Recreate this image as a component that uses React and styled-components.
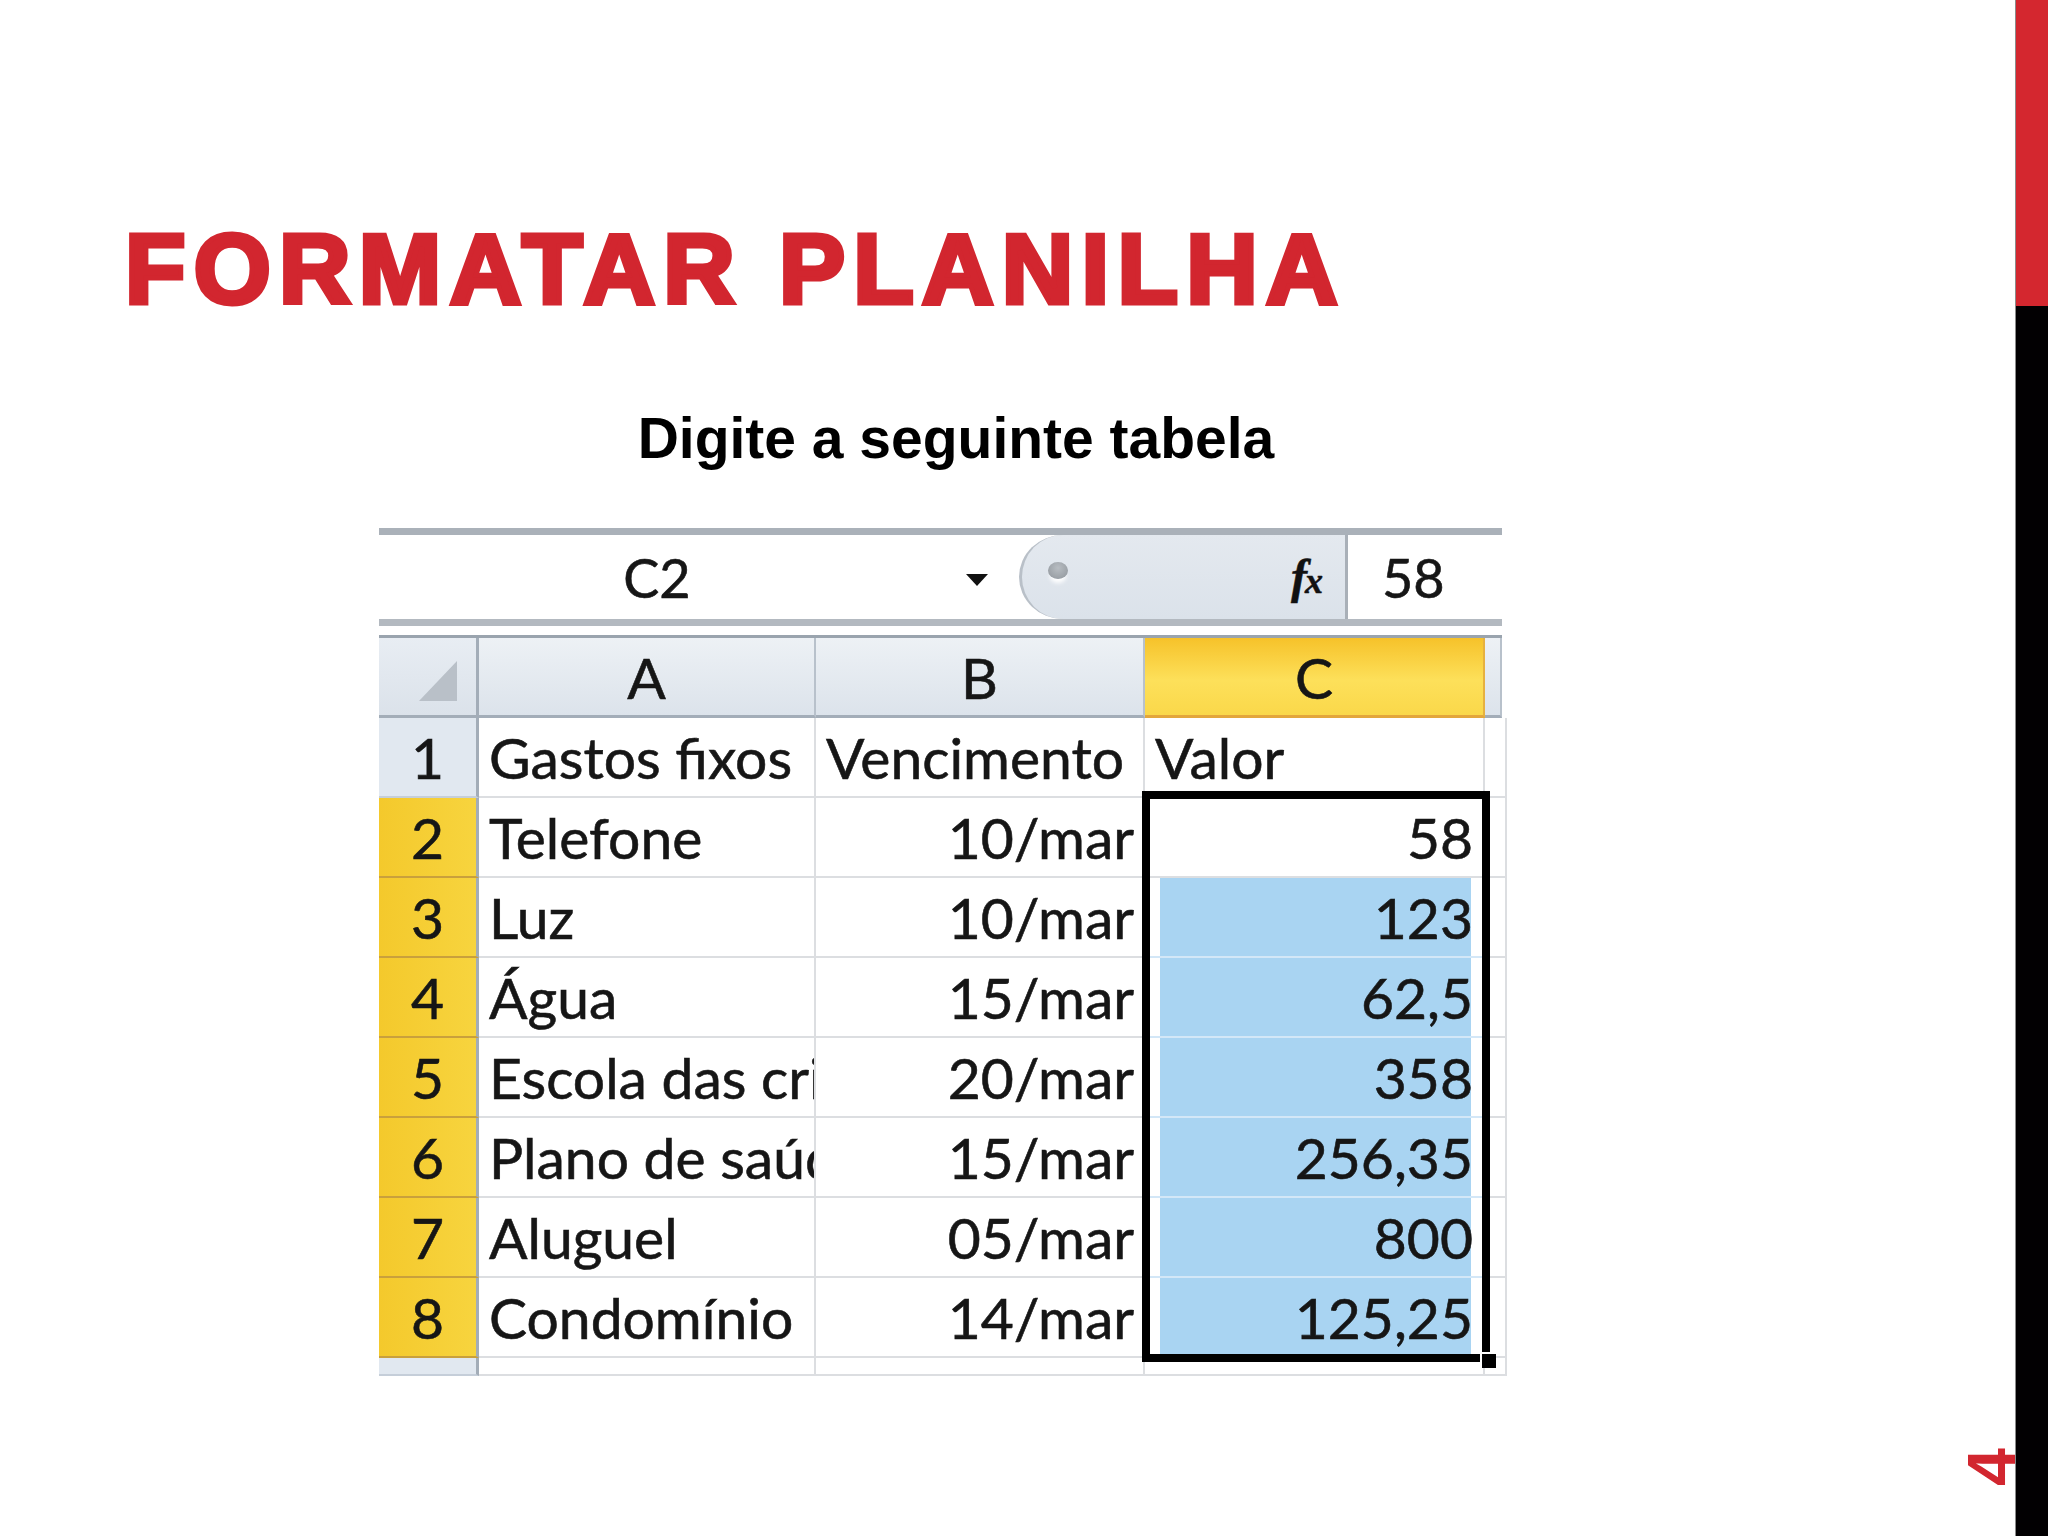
import styled, { createGlobalStyle } from "styled-components"
import { Fragment } from "react"

const Global = createGlobalStyle`
    html, body {
        margin: 0;
        padding: 0;
        background: #ffffff;
    }
    body {
        width: 2048px;
        height: 1536px;
        overflow: hidden;
        font-family: "Liberation Sans", Arial, sans-serif;
    }
`

const Slide = styled.div`
    position: relative;
    width: 2048px;
    height: 1536px;
    display: flex;
    background: #ffffff;
`

const Content = styled.div`
    flex: 1;
    display: flex;
    flex-direction: column;
    padding: 219px 0 0 125px;
`

const Title = styled.h1`
    margin: 0;
    font-family: "Liberation Sans", Arial, sans-serif;
    font-weight: 700;
    font-size: 99px;
    line-height: 1;
    letter-spacing: 8.3px;
    color: #d2262f;
    -webkit-text-stroke: 5px #d2262f;
`

const Subtitle = styled.h2`
    margin: 92px 0 0 0;
    width: 1662px;
    text-align: center;
    font-family: "Liberation Sans", Arial, sans-serif;
    font-weight: 700;
    font-size: 57px;
    line-height: 1;
    color: #000000;
`

const Sheet = styled.div`
    margin: 61px 0 0 254px;
    width: 1123px;
    display: flex;
    flex-direction: column;
    font-family: Lato, "Noto Sans", sans-serif;
    color: #161616;
    -webkit-text-stroke: 0.6px #161616;
`

const FormulaBar = styled.div`
    display: flex;
    height: 84px;
    border-top: 7px solid #aab1b9;
    border-bottom: 7px solid #b3b9c0;
    background: #ffffff;
`

const NameText = styled.div`
    width: 556px;
    display: flex;
    align-items: center;
    justify-content: center;
    font-size: 54px;
`

const ArrowBox = styled.div`
    width: 84px;
    display: flex;
    align-items: center;
    justify-content: center;
    padding-top: 6px;
`

const FnArea = styled.div`
    width: 326px;
    box-sizing: border-box;
    display: flex;
    align-items: center;
    justify-content: space-between;
    padding: 0 22px 0 26px;
    background: linear-gradient(#e4e9ef, #dbe2ea);
    border-left: 3px solid #b9c0c8;
    border-radius: 44px 0 0 44px / 42px 0 0 42px;
`

const Grip = styled.div`
    width: 20px;
    height: 17px;
    margin-top: -14px;
    border-radius: 50%;
    background: radial-gradient(circle at 50% 35%, #b8bdc2, #8f959b);
    box-shadow: 0 6px 4px -2px #ffffff;
`

const Fx = styled.div`
    font-family: "Liberation Serif", "Times New Roman", serif;
    font-style: italic;
    font-weight: 700;
    font-size: 48px;
    line-height: 1;
    color: #111;
    -webkit-text-stroke: 0.5px #111;

    span {
        font-size: 36px;
        margin-left: -2px;
    }
`

const Divider = styled.div`
    width: 3px;
    background: #a9b0b8;
`

const ValueText = styled.div`
    flex: 1;
    display: flex;
    align-items: center;
    padding-left: 34px;
    font-size: 54px;
`

const Gap = styled.div`
    height: 9px;
    background: #ffffff;
`

const Grid = styled.div`
    display: grid;
    grid-template-columns: 100px 337px 329px 340px 17px;
    grid-template-rows: repeat(9, 80px) 18px;
    border-top: 3px solid #9aa4ae;
    font-size: 57px;
`

const Corner = styled.div`
    box-sizing: border-box;
    display: flex;
    align-items: flex-end;
    justify-content: flex-end;
    padding: 0 19px 14px 0;
    background: linear-gradient(#e8edf3, #dbe2ea);
    border-right: 3px solid #a3adb8;
    border-bottom: 3px solid #a3adb8;
`

const ColHead = styled.div`
    box-sizing: border-box;
    display: flex;
    align-items: center;
    justify-content: center;
    background: ${(p) => p.$active
        ? "linear-gradient(#f6c22a, #fde05a 55%, #fad84a)"
        : "linear-gradient(#edf1f5, #dce3eb)"};
    border-right: 2px solid ${(p) => p.$active ? "#e6b13f" : "#b8c1cb"};
    border-bottom: 3px solid ${(p) => p.$active ? "#e3a63b" : "#a3adb8"};
`

const RowHead = styled.div`
    box-sizing: border-box;
    display: flex;
    align-items: center;
    justify-content: center;
    background: ${(p) => p.$active ? "linear-gradient(90deg, #f4c92c, #f7d43e)" : "#e1e8f0"};
    border-right: 3px solid #a3adb8;
    border-bottom: 2px solid ${(p) => p.$active ? "#c9a03c" : "#c5ced9"};
`

const Cell = styled.div`
    box-sizing: border-box;
    line-height: 78px;
    padding: 0 ${(p) => p.$align === "right" ? "9px" : "10px"};
    text-align: ${(p) => p.$align || "left"};
    white-space: nowrap;
    overflow: hidden;
    background: #ffffff;
    border-right: 2px solid #dcdee1;
    border-bottom: 2px solid #dcdee1;
`

const Selection = styled.div`
    grid-column: 4;
    grid-row: 3 / 10;
    position: relative;
    display: flex;
    flex-direction: column;

    &::after {
        content: "";
        position: absolute;
        top: -7px;
        right: -5px;
        bottom: -4px;
        left: -3px;
        border: 8px solid #000000;
        pointer-events: none;
    }
`

const ValueCell = styled(Cell)`
    height: 80px;
    padding-right: 10px;
    background: ${(p) => p.$fill ? "#a9d4f2" : "#ffffff"};
    box-shadow: ${(p) => p.$fill ? "inset 15px 0 0 #ffffff, inset -12px 0 0 #ffffff" : "none"};
    border-bottom: 2px solid ${(p) => p.$fill ? "#d3e7f7" : "#dcdee1"};
`

const FillHandle = styled.div`
    position: absolute;
    right: -11px;
    bottom: -10px;
    z-index: 2;
    width: 14px;
    height: 14px;
    background: #000000;
    border-left: 2px solid #ffffff;
    border-top: 2px solid #ffffff;
`

const SideBar = styled.div`
    width: 32px;
    display: flex;
    flex-direction: column;
    border-left: 1px solid #8b8b8b;
`

const RedBlock = styled.div`
    height: 306px;
    background: #d4272f;
`

const BlackBlock = styled.div`
    flex: 1;
    background: #020002;
`

const PageNumber = styled.div`
    position: absolute;
    left: 1972px;
    top: 1433px;
    width: 38px;
    height: 68px;
    font-family: "Liberation Sans", Arial, sans-serif;
    font-weight: 700;
    font-size: 68px;
    line-height: 1;
    color: #d2262f;
    transform: rotate(-90deg);
`

const rows = [
    ["Telefone", "10/mar", "58"],
    ["Luz", "10/mar", "123"],
    ["Água", "15/mar", "62,5"],
    ["Escola das crianças", "20/mar", "358"],
    ["Plano de saúde", "15/mar", "256,35"],
    ["Aluguel", "05/mar", "800"],
    ["Condomínio", "14/mar", "125,25"],
]

const App = () => {
    return (
        <Slide>
            <Global />
            <Content>
                <Title>FORMATAR PLANILHA</Title>
                <Subtitle>Digite a seguinte tabela</Subtitle>
                <Sheet>
                    <FormulaBar>
                        <NameText>C2</NameText>
                        <ArrowBox>
                            <svg width="24" height="14" viewBox="0 0 24 14">
                                <path d="M1 1 L23 1 L12 13 Z" fill="#111" />
                            </svg>
                        </ArrowBox>
                        <FnArea>
                            <Grip />
                            <Fx>f<span>x</span></Fx>
                        </FnArea>
                        <Divider />
                        <ValueText>58</ValueText>
                    </FormulaBar>
                    <Gap />
                    <Grid>
                        <Corner>
                            <svg width="38" height="40" viewBox="0 0 38 40">
                                <path d="M38 0 L38 40 L0 40 Z" fill="#b9c0c8" />
                            </svg>
                        </Corner>
                        <ColHead>A</ColHead>
                        <ColHead>B</ColHead>
                        <ColHead $active>C</ColHead>
                        <ColHead />

                        <RowHead>1</RowHead>
                        <Cell>Gastos fixos</Cell>
                        <Cell>Vencimento</Cell>
                        <Cell>Valor</Cell>
                        <Cell />

                        {rows.map((r, i) => (
                            <Fragment key={i}>
                                <RowHead $active>{i + 2}</RowHead>
                                <Cell>{r[0]}</Cell>
                                <Cell $align="right">{r[1]}</Cell>
                                <Cell />
                            </Fragment>
                        ))}

                        <Selection>
                            {rows.map((r, i) => (
                                <ValueCell key={i} $align="right" $fill={i > 0}>{r[2]}</ValueCell>
                            ))}
                            <FillHandle />
                        </Selection>

                        <RowHead />
                        <Cell />
                        <Cell />
                        <Cell />
                        <Cell />
                    </Grid>
                </Sheet>
            </Content>
            <SideBar>
                <RedBlock />
                <BlackBlock />
            </SideBar>
            <PageNumber>4</PageNumber>
        </Slide>
    )
}

export default App
